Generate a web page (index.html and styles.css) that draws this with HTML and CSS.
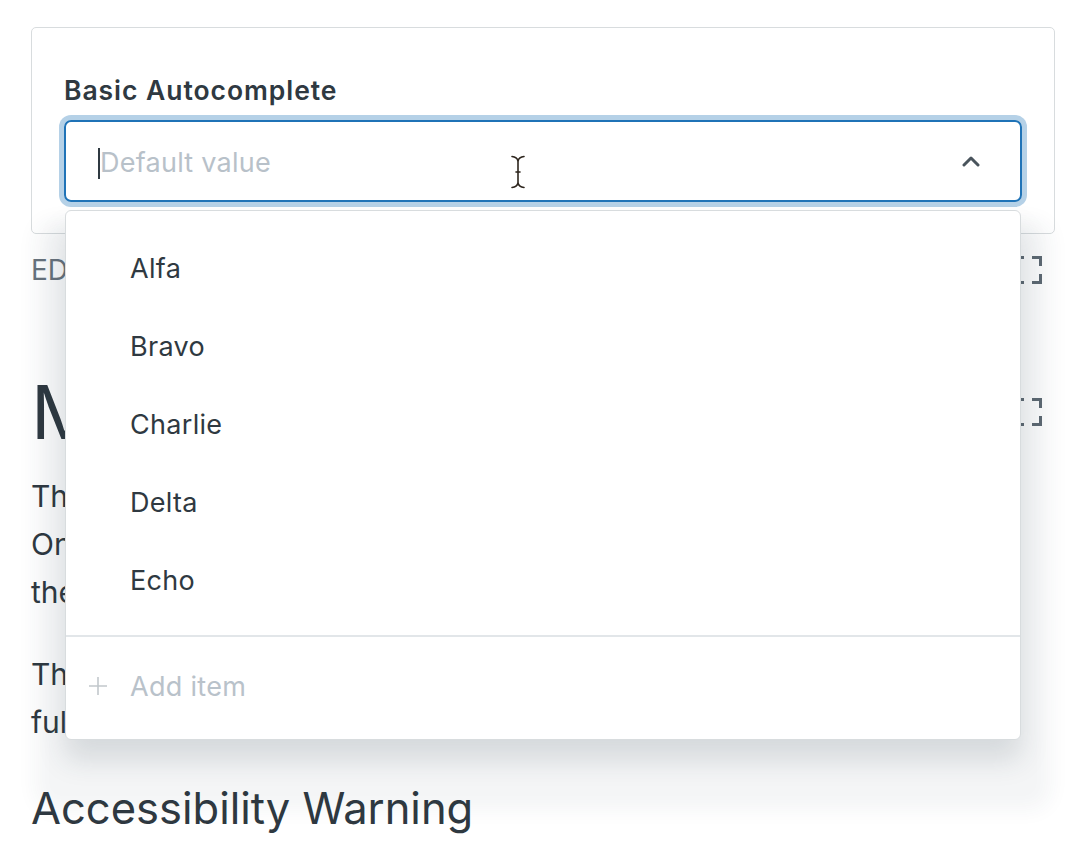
FILE: index.html
```html
<!DOCTYPE html>
<html lang="en">
<head>
<meta charset="utf-8">
<title>Basic Autocomplete</title>
<link rel="stylesheet" href="styles.css">
</head>
<body>
<main class="page">
  <section class="card">
    <div class="field">
      <label class="label">Basic Autocomplete</label>
      <div class="combo-wrap">
        <div class="combo">
          <span class="caret"></span>
          <span class="placeholder">Default value</span>
          <svg class="chevron" width="18" height="12" viewBox="0 0 18 12"><path d="M2 10 L9 3 L16 10" fill="none" stroke="#49545c" stroke-width="3" stroke-linecap="round" stroke-linejoin="round"/></svg>
          <svg class="ibeam" width="16" height="34" viewBox="0 0 16 34"><g fill="none" stroke="#2e261e" stroke-width="1.6" stroke-linecap="round"><path d="M2 1.5 Q7 2 8 6 Q9 2 14 1.5"/><path d="M8 6 V28"/><path d="M2 32.5 Q7 32 8 28 Q9 32 14 32.5"/><path d="M6 17 H10"/></g></svg>
        </div>
        <div class="menu">
          <ul class="items">
            <li class="item">Alfa</li>
            <li class="item">Bravo</li>
            <li class="item">Charlie</li>
            <li class="item">Delta</li>
            <li class="item">Echo</li>
          </ul>
          <div class="sep"></div>
          <div class="add">
            <svg class="plus" width="20" height="20" viewBox="0 0 20 20"><path d="M10 1 V19 M1 10 H19" fill="none" stroke="#c2c8cc" stroke-width="1.6"/></svg>
            <span>Add item</span>
          </div>
        </div>
      </div>
    </div>
  </section>

  <div class="toolbar">
    <span class="edit">EDIT</span>
    <svg class="full" width="28" height="28" viewBox="0 0 28 28"><path d="M1.5 10 V1.5 H10 M18 1.5 H26.5 V10 M26.5 18 V26.5 H18 M10 26.5 H1.5 V18" fill="none" stroke="#5f6a73" stroke-width="3"/></svg>
  </div>

  <div class="section-head">
    <h2 class="h2">M</h2>
    <svg class="full" width="28" height="28" viewBox="0 0 28 28"><path d="M1.5 10 V1.5 H10 M18 1.5 H26.5 V10 M26.5 18 V26.5 H18 M10 26.5 H1.5 V18" fill="none" stroke="#5f6a73" stroke-width="3"/></svg>
  </div>

  <p class="para">The<br>Once<br>the</p>
  <p class="para">The<br>full</p>

  <h3 class="h3">Accessibility Warning</h3>
</main>
</body>
</html>
```

FILE: styles.css
```css
* { box-sizing: border-box; }

html, body {
  margin: 0;
  background: #ffffff;
}

body {
  font-family: Inter, "Noto Sans", sans-serif;
  color: #2f3941;
}

.page {
  width: 1092px;
  height: 842px;
  overflow: hidden;
  padding: 27px 37px 0 31px;
}

.card {
  border: 1px solid #d8dcde;
  border-radius: 5px;
  padding: 46px 32px 31px 32px;
}

.label {
  display: block;
  font-size: 26.5px;
  line-height: 32px;
  font-weight: 600;
  letter-spacing: 0.95px;
  margin-bottom: 14px;
}

.combo-wrap {
  position: relative;
}

.combo {
  position: relative;
  height: 82px;
  border: 2px solid #1f73b7;
  border-radius: 7px;
  box-shadow: 0 0 0 5px rgba(31, 115, 183, 0.33);
  display: flex;
  align-items: center;
  padding: 3px 40px 0 32px;
}

.caret {
  width: 2px;
  height: 31px;
  background: #2f3941;
  margin-top: 2px;
}

.placeholder {
  font-size: 27px;
  letter-spacing: 0.25px;
  color: #b8c1c9;
}

.chevron {
  margin-left: auto;
  margin-top: -3px;
}

.ibeam {
  position: absolute;
  left: 444px;
  top: 33px;
}

.menu {
  position: absolute;
  z-index: 2;
  top: calc(100% + 8px);
  left: 1px;
  right: 1px;
  background: #ffffff;
  border: 1px solid #d8dcde;
  border-radius: 6px;
  padding-bottom: 14px;
  box-shadow:
    0 20px 28px rgba(40, 60, 75, 0.15),
    0 40px 20px 30px rgba(30, 50, 70, 0.05);
}

.items {
  list-style: none;
  margin: 0;
  padding: 18px 0 16px;
}

.item {
  height: 78px;
  display: flex;
  align-items: center;
  padding-left: 64px;
  font-size: 27px;
  letter-spacing: 0.3px;
  color: #2f3941;
}

.sep {
  height: 2px;
  background: #e2e6e9;
  margin-bottom: 10px;
}

.add {
  height: 78px;
  display: flex;
  align-items: center;
  padding-left: 22px;
  gap: 22px;
  font-size: 27px;
  letter-spacing: 0.3px;
  color: #b9c2ca;
}

.toolbar {
  margin-top: 16px;
  height: 40px;
  display: flex;
  align-items: center;
  justify-content: space-between;
  padding-right: 13px;
}

.edit {
  font-size: 28px;
  color: #68737d;
}

.section-head {
  margin-top: 77px;
  height: 90px;
  display: flex;
  align-items: center;
  justify-content: space-between;
  padding-right: 13px;
}

.h2 {
  margin: 0;
  font-size: 74px;
  line-height: 90px;
  font-weight: 400;
  white-space: nowrap;
}

.para {
  margin: 15px 0 0;
  font-size: 30px;
  line-height: 48px;
  white-space: nowrap;
}

.para + .para {
  margin-top: 34px;
}

.h3 {
  margin: 34px 0 0;
  font-size: 43.5px;
  line-height: 56px;
  font-weight: 400;
}
```
